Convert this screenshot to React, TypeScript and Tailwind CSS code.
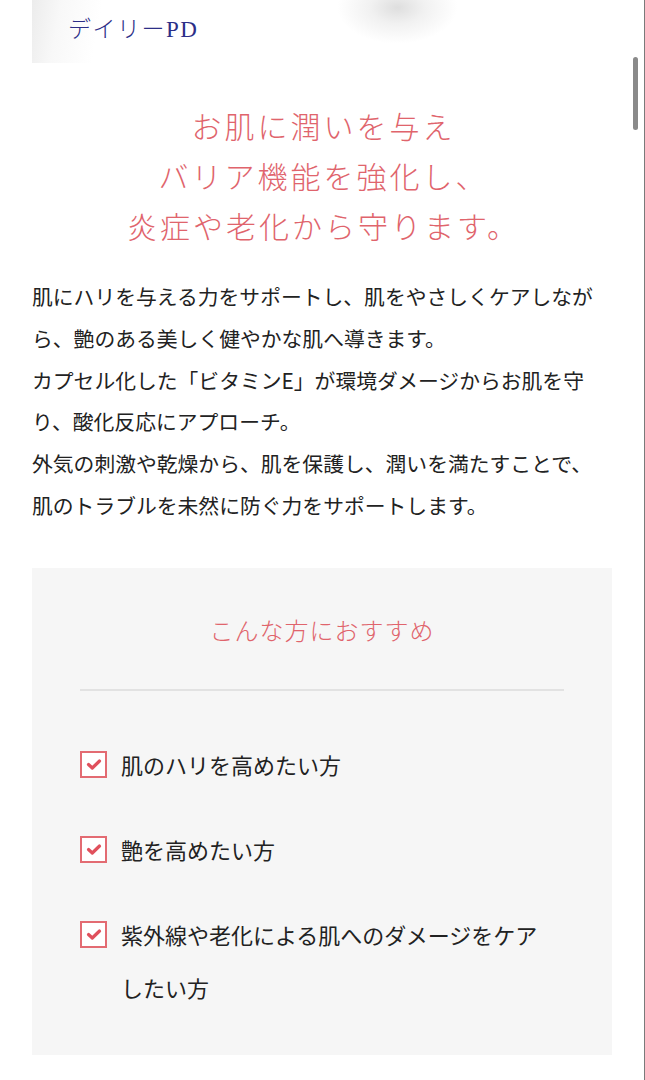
const items = [
  "肌のハリを高めたい方",
  "艶を高めたい方",
  "紫外線や老化による肌へのダメージをケアしたい方",
];

const body = [
  "肌にハリを与える力をサポートし、肌をやさしくケアしながら、艶のある美しく健やかな肌へ導きます。",
  "カプセル化した「ビタミンE」が環境ダメージからお肌を守り、酸化反応にアプローチ。",
  "外気の刺激や乾燥から、肌を保護し、潤いを満たすことで、肌のトラブルを未然に防ぐ力をサポートします。",
];

function CheckBox() {
  return (
    <span className="mt-[13px] flex h-[27px] w-[27px] shrink-0 items-center justify-center border-2 border-[#e36b72] bg-white">
      <svg width="16" height="13" viewBox="0 0 16 13" fill="none">
        <path d="M2.5 6.5 L6.3 10 L13.5 3" stroke="#e0505c" strokeWidth="3.2" strokeLinecap="round" strokeLinejoin="round" />
      </svg>
    </span>
  );
}

export default function App() {
  return (
    <div
      className="relative min-h-[1080px] w-[645px] border-r border-[#7a7a7a] bg-white"
      style={{ fontFamily: '"Noto Sans CJK JP", "Noto Sans", sans-serif' }}
    >
      {/* top image strip */}
      <div className="mx-8 h-[63px] bg-[radial-gradient(ellipse_60px_36px_at_63%_12%,#dedede_0%,#f1f1f1_45%,#ffffff_100%)]">
        <div className="flex h-full items-start bg-[linear-gradient(100deg,#ececec_0%,#f8f8f8_5%,#ffffff_12%,rgba(255,255,255,0)_35%)] pl-9 pt-[13px]">
          <span
            className="text-[23px] font-light tracking-[1.5px] text-[#2c2e87]"
            style={{ fontFamily: '"Liberation Serif", "Noto Sans CJK JP", serif' }}
          >
            デイリーPD
          </span>
        </div>
      </div>

      {/* scrollbar */}
      <div className="absolute right-[6px] top-[57px] h-[73px] w-[5px] rounded-full bg-[#8a8a8a]" />

      {/* heading */}
      <h2 className="mt-[37px] pl-[3px] text-center text-[30px] font-light leading-[50px] tracking-[3px] text-[#e0646c]">
        お肌に潤いを与え
        <br />
        バリア機能を強化し、
        <br />
        炎症や老化から守ります。
      </h2>

      {/* body */}
      <div className="mt-[26px] px-8 text-[20.8px] leading-[41.8px] text-[#222]">
        {body.map((p) => (
          <p key={p}>{p}</p>
        ))}
      </div>

      {/* recommend box */}
      <div className="mx-8 mt-[41px] bg-[#f6f6f6] px-12 pb-[41px] pt-[42px]">
        <h3 className="text-center text-[24px] font-light leading-[40px] tracking-[1px] text-[#e0646c]">
          こんな方におすすめ
        </h3>
        <div className="mt-[39px] h-[2px] bg-[#e2e2e2]" />
        <ul className="mt-[47px] flex flex-col gap-[32px]">
          {items.map((t) => (
            <li key={t} className="flex items-start gap-[14px]">
              <CheckBox />
              <span className="max-w-[430px] text-[22px] leading-[53px] text-[#222]">{t}</span>
            </li>
          ))}
        </ul>
      </div>
    </div>
  );
}
